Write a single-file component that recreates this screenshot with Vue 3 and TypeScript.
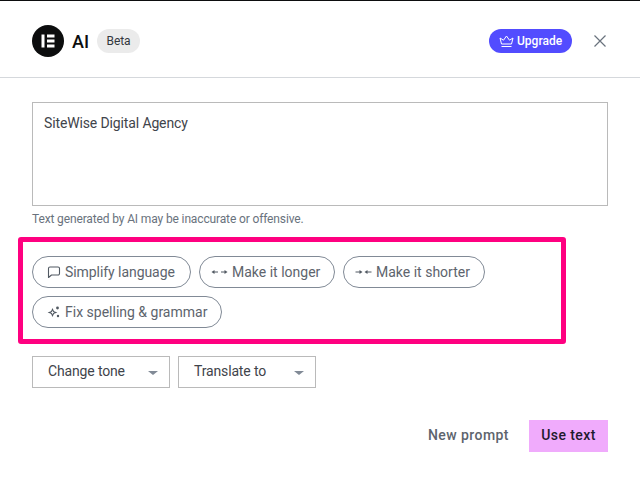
<script setup lang="ts">
const rows: string[] = ['Change tone', 'Translate to']
</script>

<template>
  <div class="page">
    <header class="head">
      <div class="brand">
        <svg class="logo" width="32" height="32" viewBox="0 0 32 32">
          <circle cx="16" cy="16" r="16" fill="#0c0d0e" />
          <rect x="9.5" y="9.5" width="3" height="13" fill="#fff" />
          <rect x="15" y="9.5" width="7.5" height="3" fill="#fff" />
          <rect x="15" y="14.5" width="7.5" height="3" fill="#fff" />
          <rect x="15" y="19.5" width="7.5" height="3" fill="#fff" />
        </svg>
        <span class="ai">AI</span>
        <span class="beta">Beta</span>
      </div>
      <div class="right">
        <span class="upgrade">
          <svg width="15" height="12" viewBox="0 0 15 12" fill="none" stroke="#fff" stroke-width="1" stroke-linejoin="round">
            <path d="M2.5 9 L1 3 L4.5 5.2 L7.5 1 L10.5 5.2 L14 3 L12.5 9 Z" />
            <path d="M2.5 11.5 H12.5" />
          </svg>
          Upgrade
        </span>
        <svg class="close" width="12" height="12" viewBox="0 0 12 12" fill="none" stroke="#69727d" stroke-width="1.2">
          <path d="M0.5 0.5 L11.5 11.5 M11.5 0.5 L0.5 11.5" />
        </svg>
      </div>
    </header>

    <main class="body">
      <div class="result">SiteWise Digital Agency</div>
      <p class="note">Text generated by AI may be inaccurate or offensive.</p>

      <section class="chips">
        <span class="chip c1">
          <svg width="14" height="14" viewBox="0 0 14 14" fill="none" stroke="#515962" stroke-width="1.1" stroke-linejoin="round">
            <path d="M3 2 H11 A1.5 1.5 0 0 1 12.5 3.5 V8.5 A1.5 1.5 0 0 1 11 10 H4.5 L1.5 12.5 V3.5 A1.5 1.5 0 0 1 3 2 Z" />
          </svg>
          <span>Simplify language</span>
        </span>
        <span class="chip c2">
          <svg width="17" height="14" viewBox="0 0 17 14" fill="#515962" stroke="#515962" stroke-width="1">
            <path d="M3 7 H7 M10 7 H14" />
            <path stroke="none" d="M0.5 7 L3.5 5 V9 Z M16.5 7 L13.5 5 V9 Z" />
          </svg>
          <span>Make it longer</span>
        </span>
        <span class="chip c3">
          <svg width="17" height="14" viewBox="0 0 17 14" fill="#515962" stroke="#515962" stroke-width="1">
            <path d="M0.5 7 H5 M12 7 H16.5" />
            <path stroke="none" d="M7.5 7 L4.5 5 V9 Z M9.5 7 L12.5 5 V9 Z" />
          </svg>
          <span>Make it shorter</span>
        </span>
        <span class="chip c4">
          <svg width="14" height="14" viewBox="0 0 14 14" fill="#515962">
            <path d="M5.5 3 L7 6.3 L10.4 7.5 L7 8.7 L5.5 12 L4 8.7 L0.6 7.5 L4 6.3 Z M5.5 5.6 L4.9 7 L3.5 7.5 L4.9 8 L5.5 9.4 L6.1 8 L7.5 7.5 L6.1 7 Z" fill-rule="evenodd" />
            <circle cx="10.5" cy="3" r="1.4" />
            <circle cx="11" cy="11" r="1.2" />
          </svg>
          <span>Fix spelling &amp; grammar</span>
        </span>
      </section>

      <div class="selects">
        <div v-for="r in rows" :key="r" class="select">
          <span>{{ r }}</span>
          <i class="caret"></i>
        </div>
      </div>

      <div class="actions">
        <span class="ghost">New prompt</span>
        <span class="use">Use text</span>
      </div>
    </main>
  </div>
</template>

<style>
html, body { margin: 0; background: #fff; }
</style>

<style scoped>
.page {
  width: 640px;
  height: 496px;
  overflow: hidden;
  box-sizing: border-box;
  border-top: 1px solid #0c0d0e;
  font-family: Roboto, "Liberation Sans", sans-serif;
  background: #fff;
}
.head {
  height: 77px;
  box-sizing: border-box;
  border-bottom: 1px solid #d5d8dc;
  padding: 4px 32px 0;
  display: flex;
  align-items: center;
  justify-content: space-between;
}
.brand, .right { display: flex; align-items: center; }
.ai { margin-left: 8px; font-size: 18px; font-weight: 500; color: #0c0d0e; }
.beta {
  margin-left: 8px;
  height: 24px;
  width: 43px;
  border-radius: 12px;
  background: #ebebeb;
  color: #33383d;
  font-size: 12px;
  letter-spacing: -0.1px;
  display: flex;
  align-items: center;
  justify-content: center;
}
.upgrade {
  width: 83px;
  height: 24px;
  box-sizing: border-box;
  padding-left: 10px;
  border-radius: 12px;
  background: #524cff;
  color: #fff;
  font-size: 12px;
  font-weight: 500;
  display: flex;
  align-items: center;
  gap: 3px;
}
.close { margin-left: 22px; margin-right: 2px; }
.body { padding: 24px 32px 0; }
.result {
  height: 104px;
  box-sizing: border-box;
  border: 1px solid #bababa;
  padding: 12px 11px;
  font-size: 14px;
  line-height: 16px;
  letter-spacing: -0.13px;
  color: #3f444b;
}
.note {
  margin: 5px 0 0;
  font-size: 12px;
  line-height: 16px;
  letter-spacing: -0.135px;
  color: #69727d;
}
.chips {
  margin: 10px 0 0 -14px;
  width: 548px;
  height: 107px;
  box-sizing: border-box;
  border: 5px solid #ff0080;
  border-radius: 3px;
  padding: 14px 9px 0;
  display: flex;
  flex-wrap: wrap;
  align-content: flex-start;
  gap: 8px;
}
.chip {
  height: 32px;
  box-sizing: border-box;
  border: 1px solid #818a96;
  border-radius: 16px;
  color: #5d646d;
  font-size: 14px;
  display: flex;
  align-items: center;
}
.c1 { width: 159px; padding-left: 14px; gap: 4px; letter-spacing: -0.06px; }
.c2 { width: 136px; padding-left: 11px; gap: 4px; }
.c3 { width: 142px; padding-left: 11px; gap: 4px; }
.c4 { width: 190px; padding-left: 14px; gap: 4px; }
.selects { margin-top: 12px; display: flex; gap: 8px; }
.select {
  width: 138px;
  height: 32px;
  box-sizing: border-box;
  border: 1px solid #bababa;
  padding: 0 11px 2px 15px;
  font-size: 14px;
  letter-spacing: -0.15px;
  color: #3f444b;
  display: flex;
  align-items: center;
  justify-content: space-between;
}
.caret {
  width: 0;
  height: 0;
  border-left: 5px solid transparent;
  border-right: 5px solid transparent;
  border-top: 4px solid #818a96;
  margin-top: 4px;
}
.actions {
  margin-top: 32px;
  display: flex;
  justify-content: flex-end;
  align-items: center;
}
.ghost { font-size: 14px; font-weight: 500; color: #5d646d; letter-spacing: 0.45px; margin-right: 20px; padding-bottom: 2px; }
.use {
  width: 79px;
  height: 32px;
  box-sizing: border-box;
  padding-bottom: 2px;
  background: #f0abfc;
  color: #1f1a2e;
  font-size: 14px;
  font-weight: 500;
  letter-spacing: 0.4px;
  display: flex;
  align-items: center;
  justify-content: center;
}
</style>
